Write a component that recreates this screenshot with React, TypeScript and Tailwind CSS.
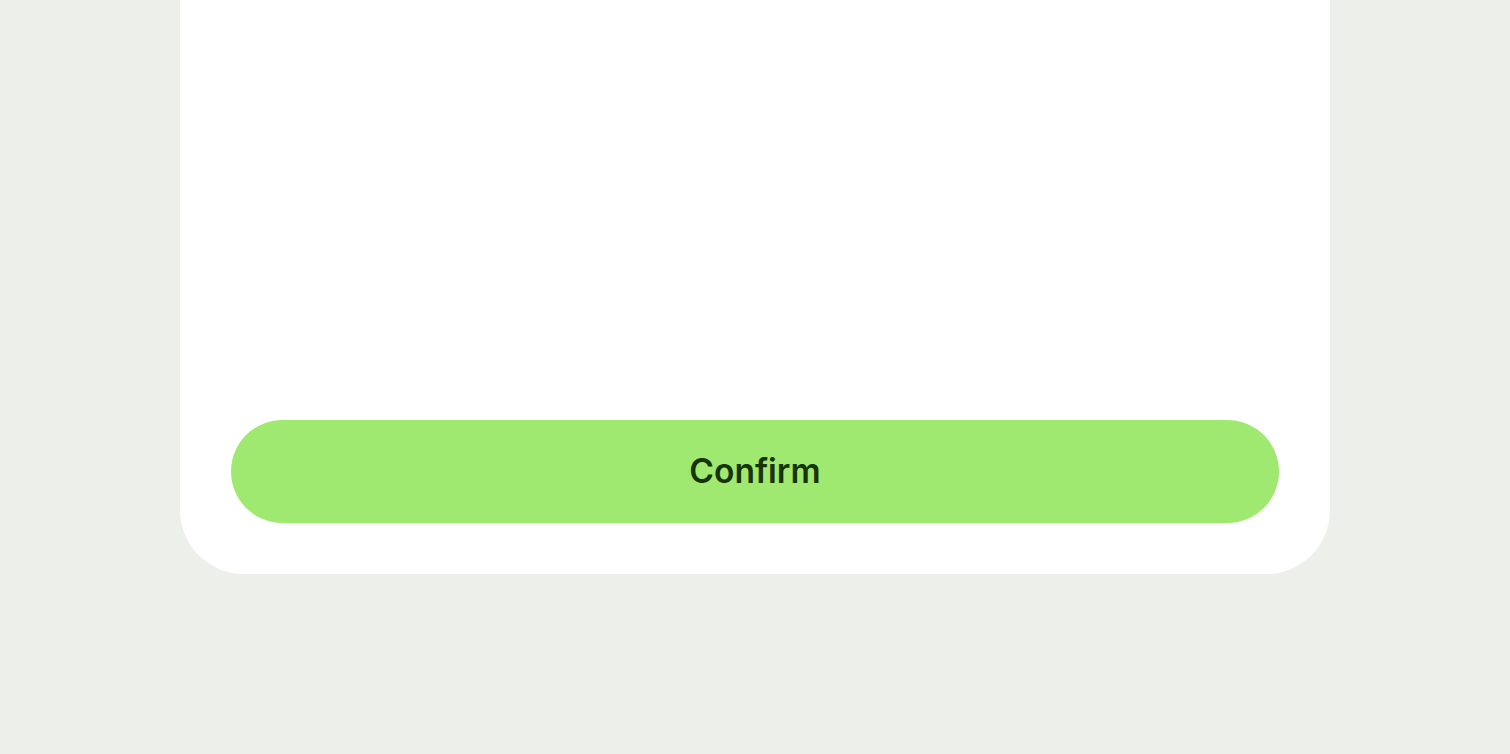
import React from 'react';

const App: React.FC = () => {
  return (
    <div className="min-h-screen w-full bg-[#edefea]" style={{ fontFamily: 'Inter, "Noto Sans", sans-serif' }}>
      <div className="mx-auto flex h-[574px] w-[1150px] flex-col justify-end rounded-b-[64px] bg-white px-[51px] pb-[51px]">
        <button className="flex h-[103px] w-full items-center justify-center rounded-full bg-[#a0e970] text-[33.5px] font-semibold text-[#173300]">
          Confirm
        </button>
      </div>
    </div>
  );
};

export default App;
